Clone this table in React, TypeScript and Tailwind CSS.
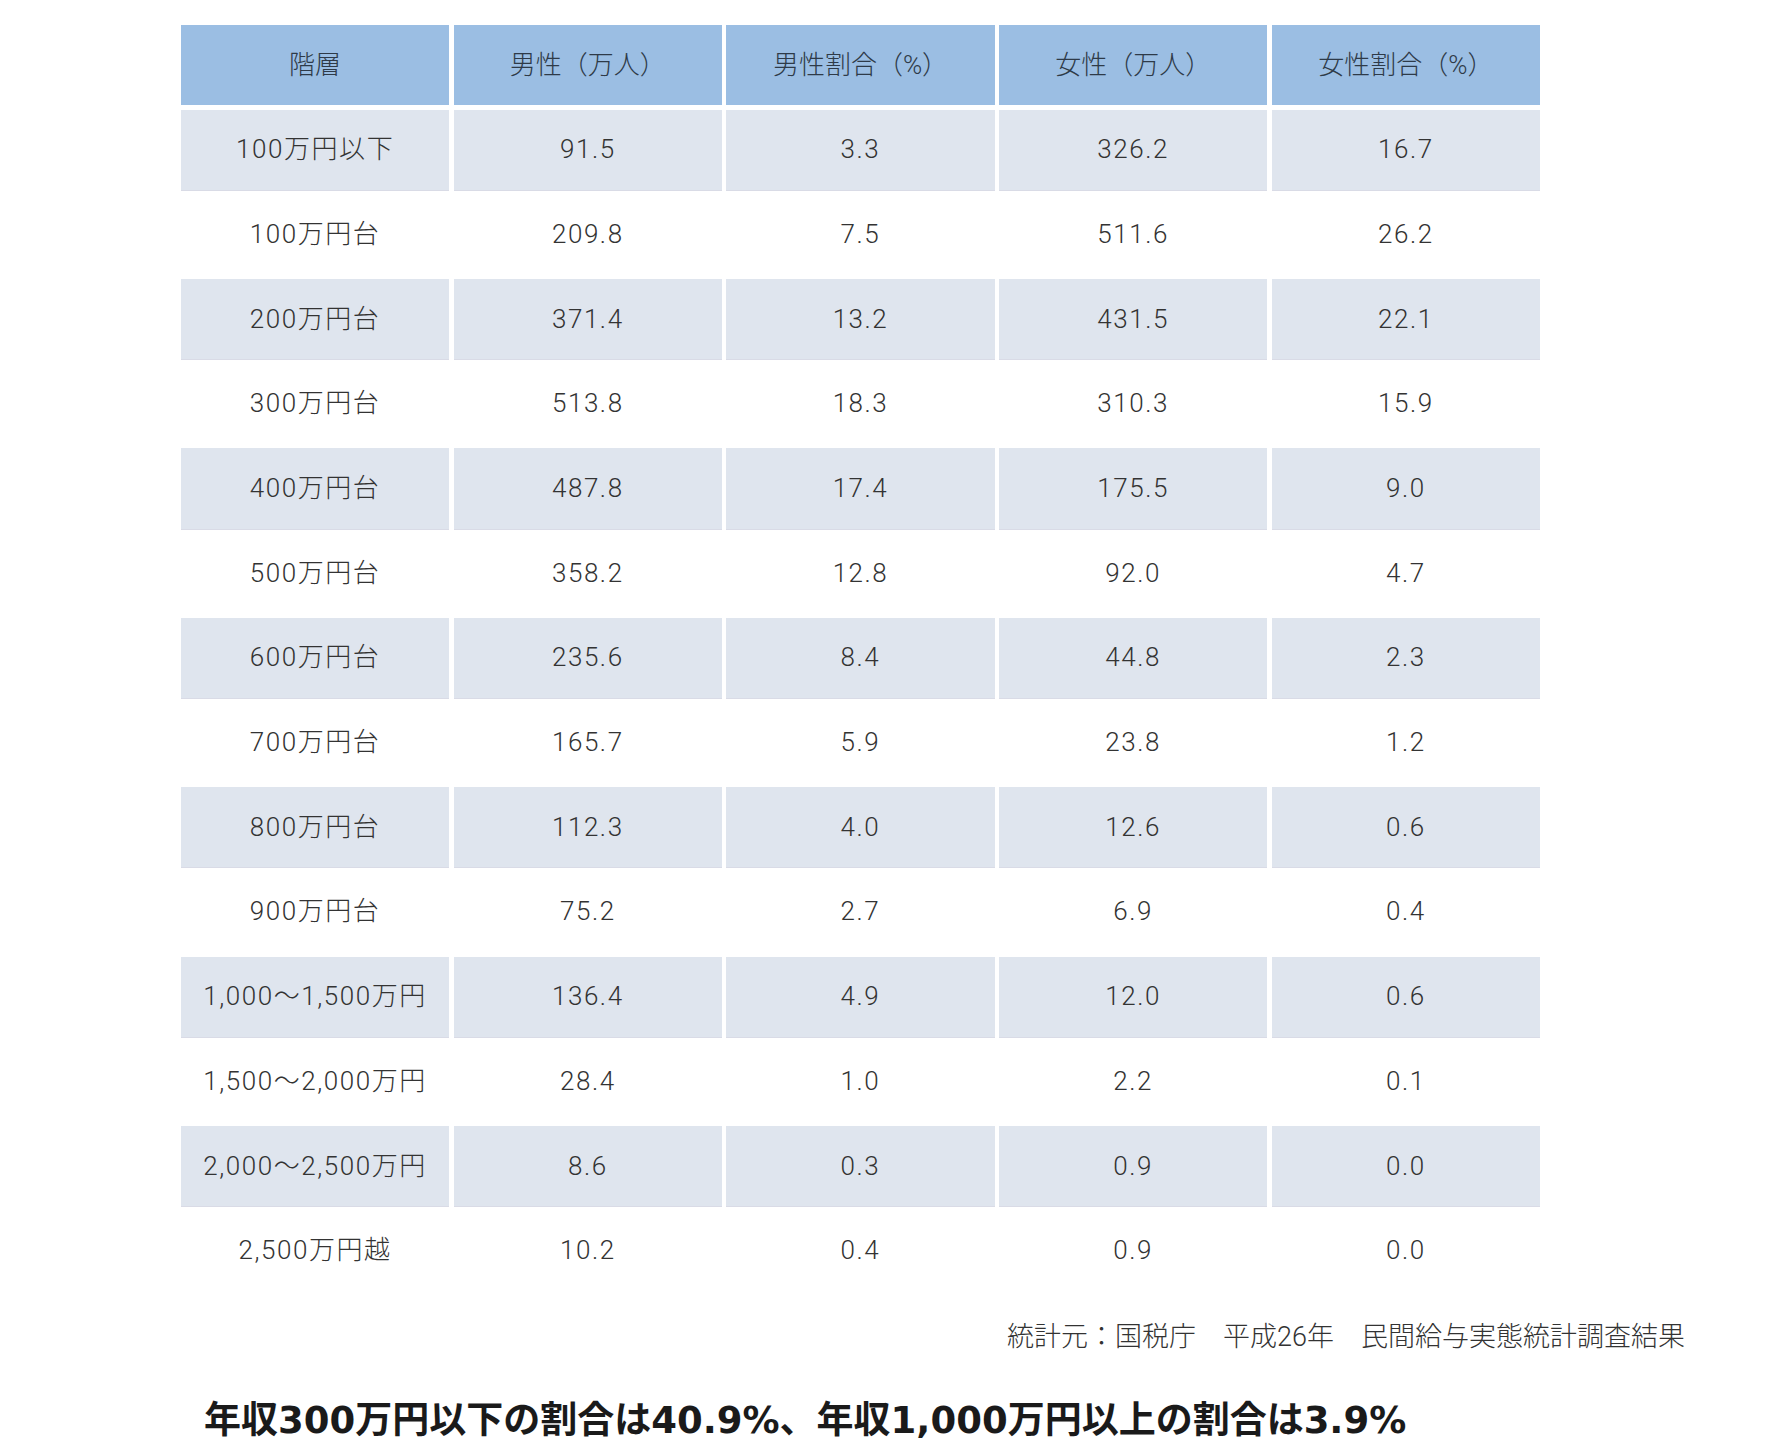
const headers = ['階層', '男性（万人）', '男性割合（%）', '女性（万人）', '女性割合（%）'];

const rows: string[][] = [
  ['100万円以下', '91.5', '3.3', '326.2', '16.7'],
  ['100万円台', '209.8', '7.5', '511.6', '26.2'],
  ['200万円台', '371.4', '13.2', '431.5', '22.1'],
  ['300万円台', '513.8', '18.3', '310.3', '15.9'],
  ['400万円台', '487.8', '17.4', '175.5', '9.0'],
  ['500万円台', '358.2', '12.8', '92.0', '4.7'],
  ['600万円台', '235.6', '8.4', '44.8', '2.3'],
  ['700万円台', '165.7', '5.9', '23.8', '1.2'],
  ['800万円台', '112.3', '4.0', '12.6', '0.6'],
  ['900万円台', '75.2', '2.7', '6.9', '0.4'],
  ['1,000〜1,500万円', '136.4', '4.9', '12.0', '0.6'],
  ['1,500〜2,000万円', '28.4', '1.0', '2.2', '0.1'],
  ['2,000〜2,500万円', '8.6', '0.3', '0.9', '0.0'],
  ['2,500万円越', '10.2', '0.4', '0.9', '0.0'],
];

const App = () => {
  return (
    <div className="min-h-screen bg-white text-[#333] pl-[181px] pt-[25px] pb-[20px] font-['Roboto','Noto_Sans_CJK_JP',sans-serif]">
      {/* Income table */}
      <div className="w-[1359px] grid grid-cols-5 gap-[4.5px]">
        {headers.map((h) => (
          <div
            key={h}
            className="h-[80.2px] bg-[#9bbee3] flex items-center justify-center text-[26px] font-light text-[#2e3a48]"
          >
            {h}
          </div>
        ))}
        {rows.map((row, i) =>
          row.map((cell, j) => (
            <div
              key={`${i}-${j}`}
              className={`h-[80.2px] flex items-center justify-center text-[26px] font-light tracking-[0.06em] ${
                i % 2 === 0 ? 'bg-[#dfe5ee] shadow-[0_1px_0_#d9dbe6]' : 'bg-white'
              }`}
            >
              {cell}
            </div>
          ))
        )}
      </div>

      <div className="w-[1504px] flex justify-end mt-[26px] text-[27px] font-light text-[#333]">
        統計元：国税庁　平成26年　民間給与実態統計調査結果
      </div>

      <h2 className="mt-[45px] ml-[23px] text-[37px] font-bold text-[#1a1a1a] leading-none font-['DejaVu_Sans','Noto_Sans_CJK_JP',sans-serif]">
        年収300万円以下の割合は40.9%、年収1,000万円以上の割合は3.9%
      </h2>
    </div>
  );
};

export default App;
